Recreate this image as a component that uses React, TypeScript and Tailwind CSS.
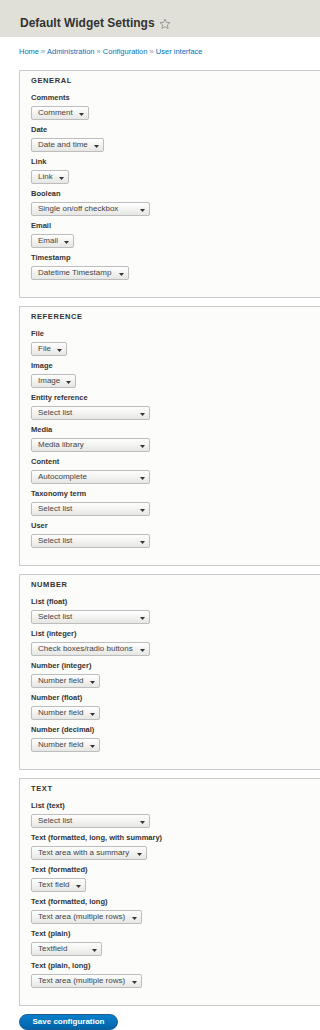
import React from "react";

type Item = { label: string; value: string; w: number };
type Group = { title: string; items: Item[] };

const groups: Group[] = [
  {
    title: "General",
    items: [
      { label: "Comments", value: "Comment", w: 58 },
      { label: "Date", value: "Date and time", w: 73 },
      { label: "Link", value: "Link", w: 38 },
      { label: "Boolean", value: "Single on/off checkbox", w: 119 },
      { label: "Email", value: "Email", w: 43 },
      { label: "Timestamp", value: "Datetime Timestamp", w: 98 },
    ],
  },
  {
    title: "Reference",
    items: [
      { label: "File", value: "File", w: 36 },
      { label: "Image", value: "Image", w: 45 },
      { label: "Entity reference", value: "Select list", w: 119 },
      { label: "Media", value: "Media library", w: 119 },
      { label: "Content", value: "Autocomplete", w: 119 },
      { label: "Taxonomy term", value: "Select list", w: 119 },
      { label: "User", value: "Select list", w: 119 },
    ],
  },
  {
    title: "Number",
    items: [
      { label: "List (float)", value: "Select list", w: 119 },
      { label: "List (integer)", value: "Check boxes/radio buttons", w: 119 },
      { label: "Number (integer)", value: "Number field", w: 69 },
      { label: "Number (float)", value: "Number field", w: 69 },
      { label: "Number (decimal)", value: "Number field", w: 69 },
    ],
  },
  {
    title: "Text",
    items: [
      { label: "List (text)", value: "Select list", w: 119 },
      { label: "Text (formatted, long, with summary)", value: "Text area with a summary", w: 116 },
      { label: "Text (formatted)", value: "Text field", w: 55 },
      { label: "Text (formatted, long)", value: "Text area (multiple rows)", w: 111 },
      { label: "Text (plain)", value: "Textfield", w: 71 },
      { label: "Text (plain, long)", value: "Text area (multiple rows)", w: 111 },
    ],
  },
];

function Select({ value, w }: { value: string; w: number }) {
  return (
    <div
      className="relative mt-[3px] h-[14px] rounded-[2px] border border-[#bdbdbd] bg-gradient-to-b from-[#ffffff] to-[#e6e6e4] pl-[6px] text-[8px] leading-[12px] text-[#444] whitespace-nowrap"
      style={{ width: w }}
    >
      {value}
      <svg
        className="absolute right-[4px] top-[6px]"
        width="5"
        height="3"
        viewBox="0 0 5 3"
      >
        <polygon points="0,0 5,0 2.5,3" fill="#333" />
      </svg>
    </div>
  );
}

function Fieldset({ group }: { group: Group }) {
  return (
    <section className="border border-r-0 border-[#cccccc] bg-[#fcfcfa] pt-[5px] pb-[17px] pl-[11px]">
      <div className="mb-[7px] text-[7.5px] font-bold uppercase leading-[10px] tracking-[0.6px] text-[#333]">
        {group.title}
      </div>
      <div className="flex flex-col gap-[5px]">
        {group.items.map((it, i) => (
          <div key={i}>
            <div className="text-[7.5px] font-bold leading-[10px] text-[#333] whitespace-nowrap">
              {it.label}
            </div>
            <Select value={it.value} w={it.w} />
          </div>
        ))}
      </div>
    </section>
  );
}

const Sep = () => <span className="text-[#7d95ad]"> » </span>;

export default function App() {
  return (
    <div className="min-h-screen overflow-hidden bg-white font-['Liberation_Sans',Arial,sans-serif]">
      <header className="h-[37px] bg-[#e0e0d8] pl-[20px] pt-[16px]">
        <h1 className="flex items-center text-[12px] font-bold leading-[15px] text-[#333]">
          Default Widget Settings
          <svg className="ml-[4px] mt-[1px]" width="12" height="12" viewBox="0 0 24 24">
            <polygon
              points="12,2 14.9,8.6 22,9.3 16.6,14 18.2,21 12,17.3 5.8,21 7.4,14 2,9.3 9.1,8.6"
              fill="none"
              stroke="#8a8a85"
              strokeWidth="1.6"
              strokeLinejoin="round"
            />
          </svg>
        </h1>
      </header>
      <nav className="mt-[10px] pl-[19px] text-[7.5px] leading-[10px] text-[#0074bd] whitespace-nowrap">
        <span>Home</span>
        <Sep />
        <span>Administration</span>
        <Sep />
        <span>Configuration</span>
        <Sep />
        <span>User interface</span>
      </nav>
      <main className="mt-[13px] pl-[19px]">
        <div className="flex flex-col gap-[8px]">
          {groups.map((g, i) => (
            <Fieldset key={i} group={g} />
          ))}
        </div>
        <button className="mt-[8px] h-[16px] w-[99px] rounded-full border border-[#1a5d96] bg-gradient-to-b from-[#0a7fcb] to-[#0063a8] text-[8px] font-bold leading-[14px] text-white">
          Save configuration
        </button>
      </main>
    </div>
  );
}
